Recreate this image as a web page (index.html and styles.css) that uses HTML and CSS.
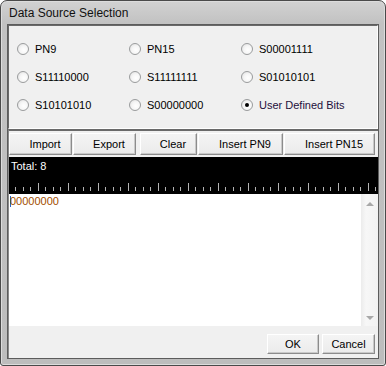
FILE: index.html
```html
<!DOCTYPE html>
<html lang="en">
<head>
  <meta charset="UTF-8">
  <title>Data Source Selection</title>
  <link rel="stylesheet" href="styles.css">
</head>
<body>
  <div class="window">
    <div class="title">Data Source Selection</div>
    <div class="client">
      <div class="options">
        <label class="opt"><span class="radio"></span>PN9</label>
        <label class="opt"><span class="radio"></span>PN15</label>
        <label class="opt"><span class="radio"></span>S00001111</label>
        <label class="opt"><span class="radio"></span>S11110000</label>
        <label class="opt"><span class="radio"></span>S11111111</label>
        <label class="opt"><span class="radio"></span>S01010101</label>
        <label class="opt"><span class="radio"></span>S10101010</label>
        <label class="opt"><span class="radio"></span>S00000000</label>
        <label class="opt checked"><span class="radio"></span>User Defined Bits</label>
      </div>

      <div class="editor-panel">
        <div class="toolbar">
          <button class="btn">Import</button>
          <button class="btn">Export</button>
          <button class="btn clear">Clear</button>
          <button class="btn">Insert PN9</button>
          <button class="btn">Insert PN15</button>
        </div>

        <div class="bit-header">
          <div class="total">Total: 8</div>
          <svg class="ruler" width="368" height="8" viewBox="0 0 368 8">
            <defs>
              <pattern id="ticks" x="6" y="0" width="30" height="8" patternUnits="userSpaceOnUse">
                <line x1="0.5" y1="4" x2="0.5" y2="8" stroke="#b4b4b4"/>
                <line x1="8.5" y1="4" x2="8.5" y2="8" stroke="#b4b4b4"/>
                <line x1="15.5" y1="4" x2="15.5" y2="8" stroke="#b4b4b4"/>
                <line x1="23.5" y1="0" x2="23.5" y2="8" stroke="#b4b4b4"/>
              </pattern>
            </defs>
            <rect x="0" y="0" width="368" height="8" fill="url(#ticks)"/>
          </svg>
        </div>

        <div class="bits">
          <div class="bits-text"><span class="caret"></span>00000000</div>
          <div class="scrollbar">
            <span class="arrow up"></span>
            <span class="arrow down"></span>
          </div>
        </div>

        <div class="footer">
          <button class="btn ok">OK</button>
          <button class="btn cancel">Cancel</button>
        </div>
      </div>
    </div>
  </div>
</body>
</html>
```

FILE: styles.css
```css
/* Dialog frame */
body {
  margin: 0;
  background: #ffffff;
  font-family: "Liberation Sans", Arial, sans-serif;
  font-size: 11px;
  color: #000;
}

.window {
  box-sizing: border-box;
  width: 386px;
  height: 366px;
  border: 1px solid #4a4a4a;
  border-radius: 7px 7px 3px 3px;
  background: linear-gradient(to bottom, #d2d2d2 0, #c2c2c2 22px, #bdbdbd 100%);
  box-shadow: inset 0 0 0 1px #dcdcdc;
  padding: 0 6px 6px 6px;
  display: flex;
  flex-direction: column;
}

.title {
  height: 23px;
  line-height: 23px;
  padding: 1px 0 0 2px;
  box-sizing: border-box;
  font-size: 12px;
  color: #111;
}

.client {
  flex: 1;
  border: 1px solid #5c5c5c;
  background: #f0f0f0;
  display: flex;
  flex-direction: column;
}

/* Radio group */
.options {
  box-sizing: border-box;
  height: 104px;
  border: 1px solid;
  border-color: #696969 #ffffff #ffffff #696969;
  padding: 9px 0 0 8px;
  display: grid;
  grid-template-columns: 112px 112px 112px;
  grid-auto-rows: 28px;
}

.opt {
  display: flex;
  align-items: center;
  gap: 6px;
}

.radio {
  box-sizing: border-box;
  width: 12px;
  height: 12px;
  border-radius: 50%;
  border: 1px solid #9a9c9d;
  background: radial-gradient(circle at 60% 60%, #ffffff 0, #f6f6f6 45%, #dcdcdc 100%);
  display: flex;
  align-items: center;
  justify-content: center;
}

.opt.checked {
  color: #1e0f3c;
}

.opt.checked .radio::after {
  content: "";
  width: 4px;
  height: 4px;
  border-radius: 50%;
  background: #000;
}

/* Lower panel */
.editor-panel {
  flex: 1;
  display: flex;
  flex-direction: column;
  border-top: 2px solid #6a6a6a;
  border-left: 1px solid #8a8a8a;
}

.toolbar {
  height: 26px;
  box-sizing: border-box;
  padding: 2px 0;
  display: flex;
}

.btn {
  box-sizing: border-box;
  height: 22px;
  margin: 0;
  padding: 0;
  font-family: inherit;
  font-size: 11px;
  color: #000;
  background: linear-gradient(to bottom, #f4f4f4, #ebebeb);
  border: 1px solid;
  border-color: #ffffff #8c8c8c #8c8c8c #ffffff;
  box-shadow: inset -1px -1px 0 #c9c9c9;
}

.toolbar .btn {
  padding-left: 9px;
  margin-right: 1px;
}

.toolbar .btn:nth-child(1) { width: 63px; }
.toolbar .btn:nth-child(2) { width: 63px; margin-right: 4px; }
.toolbar .btn:nth-child(3) { width: 57px; }
.toolbar .btn:nth-child(4) { width: 85px; }
.toolbar .btn:nth-child(5) { width: 91px; }

.bit-header {
  height: 37px;
  box-sizing: border-box;
  background: #000;
  color: #fff;
  padding-top: 2px;
}

.total {
  padding-left: 2px;
  line-height: 14px;
}

.ruler {
  display: block;
  margin-top: 10px;
}

/* Bit text area */
.bits {
  height: 132px;
  display: flex;
  background: #fff;
}

.bits-text {
  flex: 1;
  padding: 1px 0 0 1px;
  line-height: 13px;
  color: #a24e00;
}

.caret {
  display: inline-block;
  width: 1px;
  height: 11px;
  background: #2a64c8;
  vertical-align: -2px;
  margin-right: -1px;
}

.scrollbar {
  width: 17px;
  background: linear-gradient(to right, #ececec, #f7f7f7 30%, #f2f2f2);
  display: flex;
  flex-direction: column;
  justify-content: space-between;
  align-items: center;
  padding: 8px 0 6px;
  box-sizing: border-box;
}

.arrow {
  width: 0;
  height: 0;
  border-left: 4px solid transparent;
  border-right: 4px solid transparent;
}

.arrow.up {
  border-bottom: 4px solid #a8a8a8;
}

.arrow.down {
  border-top: 4px solid #a8a8a8;
}

.footer {
  flex: 1;
  display: flex;
  justify-content: flex-end;
  align-items: flex-start;
  padding: 8px 3px 0 0;
  gap: 3px;
}

.footer .ok { width: 52px; height: 20px; }
.footer .cancel { width: 53px; height: 20px; }
```
